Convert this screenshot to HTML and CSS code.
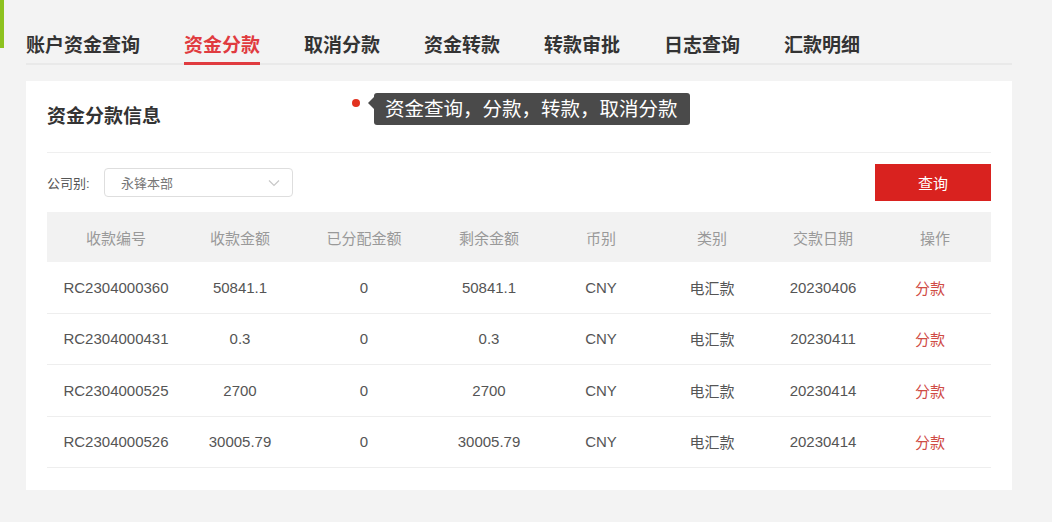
FILE: index.html
```html
<!doctype html>
<html lang="zh-CN">
  <head>
    <meta charset="UTF-8" />
    <meta name="viewport" content="width=device-width, initial-scale=1.0" />
    <title>资金分款</title>
    <link rel="stylesheet" href="styles.css">
  </head>

  <body>
    <div class="side-mark"></div>
    <div class="main">
      <nav class="tabs">
        <a class="tab">账户资金查询</a>
        <a class="tab active">资金分款</a>
        <a class="tab">取消分款</a>
        <a class="tab">资金转款</a>
        <a class="tab">转款审批</a>
        <a class="tab">日志查询</a>
        <a class="tab">汇款明细</a>
      </nav>

      <div class="card">
        <h2 class="card-title">资金分款信息</h2>

        <!-- hint bubble next to the title -->
        <span class="hint-dot"></span>
        <div class="hint">资金查询，分款，转款，取消分款</div>

        <div class="filter-row">
          <label class="filter-label">公司别:</label>
          <div class="select">
            <span>永锋本部</span>
            <svg class="chevron" width="12" height="8" viewBox="0 0 12 8">
              <path d="M1 1.5 L6 6.5 L11 1.5" fill="none" stroke="#c8c8c8" stroke-width="1.2" />
            </svg>
          </div>
          <button class="btn-query">查询</button>
        </div>

        <table class="data-table">
          <colgroup>
            <col style="width: 138px" />
            <col style="width: 110px" />
            <col style="width: 138px" />
            <col style="width: 112px" />
            <col style="width: 112px" />
            <col style="width: 110px" />
            <col style="width: 112px" />
            <col style="width: 112px" />
          </colgroup>
          <thead>
            <tr>
              <th>收款编号</th>
              <th>收款金额</th>
              <th>已分配金额</th>
              <th>剩余金额</th>
              <th>币别</th>
              <th>类别</th>
              <th>交款日期</th>
              <th>操作</th>
            </tr>
          </thead>
          <tbody>
            <tr>
              <td>RC2304000360</td>
              <td>50841.1</td>
              <td>0</td>
              <td>50841.1</td>
              <td>CNY</td>
              <td>电汇款</td>
              <td>20230406</td>
              <td class="col-op"><a class="op">分款</a></td>
            </tr>
            <tr>
              <td>RC2304000431</td>
              <td>0.3</td>
              <td>0</td>
              <td>0.3</td>
              <td>CNY</td>
              <td>电汇款</td>
              <td>20230411</td>
              <td class="col-op"><a class="op">分款</a></td>
            </tr>
            <tr>
              <td>RC2304000525</td>
              <td>2700</td>
              <td>0</td>
              <td>2700</td>
              <td>CNY</td>
              <td>电汇款</td>
              <td>20230414</td>
              <td class="col-op"><a class="op">分款</a></td>
            </tr>
            <tr>
              <td>RC2304000526</td>
              <td>30005.79</td>
              <td>0</td>
              <td>30005.79</td>
              <td>CNY</td>
              <td>电汇款</td>
              <td>20230414</td>
              <td class="col-op"><a class="op">分款</a></td>
            </tr>
          </tbody>
        </table>
      </div>
    </div>
  </body>
</html>
```

FILE: styles.css
```css
/* General styles */
body {
  margin: 0;
  padding: 0;
  background: #f3f3f3;
  color: #333;
  font-family: 'Liberation Sans', 'Noto Sans CJK SC', sans-serif;
  position: relative;
  height: 522px;
  overflow: hidden;
}

.side-mark {
  position: absolute;
  left: 0;
  top: 0;
  width: 4px;
  height: 48px;
  background: #8dc21f;
}

.main {
  width: 986px;
  margin-left: 26px;
}

/* Tabs */
.tabs {
  display: flex;
  gap: 44px;
  height: 63px;
  border-bottom: 2px solid #e9e9e9;
}

.tab {
  font-size: 19px;
  font-weight: bold;
  color: #333;
  line-height: 28px;
  padding-top: 32px;
  cursor: pointer;
}

.tab.active {
  color: #e03b3f;
  height: 30px;
  border-bottom: 3px solid #e03b3f;
  margin-bottom: -2px;
}

/* Card */
.card {
  position: relative;
  background: #ffffff;
  margin-top: 16px;
  padding: 0 21px 22px;
}

.card-title {
  margin: 0;
  padding: 22px 0 21px;
  font-size: 19px;
  line-height: 28px;
  font-weight: bold;
  color: #333;
  border-bottom: 1px solid #efefef;
}

.hint-dot {
  position: absolute;
  left: 326px;
  top: 18px;
  width: 8px;
  height: 8px;
  border-radius: 50%;
  background: #e2321f;
}

.hint {
  position: absolute;
  left: 348px;
  top: 12px;
  height: 32px;
  padding: 0 12px 0 11px;
  background: #4a4a4a;
  border-radius: 3px;
  color: #ffffff;
  font-size: 19.5px;
  line-height: 32px;
  white-space: nowrap;
}

.hint::before {
  content: '';
  position: absolute;
  left: -6px;
  top: 4px;
  border-top: 6px solid transparent;
  border-bottom: 6px solid transparent;
  border-right: 6px solid #4a4a4a;
}

/* Filter row */
.filter-row {
  display: flex;
  align-items: center;
  padding-top: 11px;
  margin-bottom: 11px;
}

.filter-label {
  font-size: 13px;
  color: #555;
  width: 57px;
}

.select {
  width: 171px;
  height: 27px;
  border: 1px solid #dedede;
  border-radius: 4px;
  padding-left: 16px;
  display: flex;
  align-items: center;
  justify-content: space-between;
  font-size: 13px;
  color: #777;
}

.chevron {
  margin-right: 12px;
}

.btn-query {
  margin-left: auto;
  width: 116px;
  height: 37px;
  border: none;
  background: #d9221f;
  color: #ffffff;
  font-size: 15px;
  font-family: inherit;
  cursor: pointer;
}

/* Table */
.data-table {
  width: 944px;
  border-collapse: collapse;
  table-layout: fixed;
  font-size: 15px;
}

.data-table th {
  height: 50px;
  padding: 0;
  background: #f2f2f2;
  color: #999;
  font-weight: normal;
  text-align: center;
}

.data-table td {
  height: 50.5px;
  padding: 0;
  border-bottom: 1px solid #eeeeee;
  color: #555;
  text-align: center;
}

.data-table .col-op {
  padding-right: 10px;
}

.op {
  color: #cf4b45;
  cursor: pointer;
}
```
